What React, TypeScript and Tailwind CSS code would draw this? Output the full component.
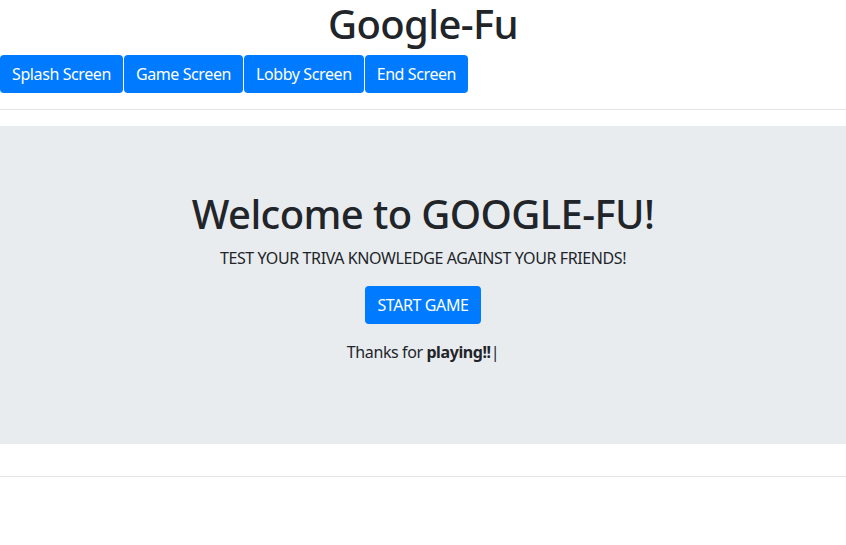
export default function App() {
  const screens = ["Splash Screen", "Game Screen", "Lobby Screen", "End Screen"];
  return (
    <div className="min-h-screen bg-white text-[#212529] font-['Noto_Sans',sans-serif] tracking-[-0.025em]">
      <h1 className="text-center text-[40px] leading-[1.2] font-medium tracking-[-0.015em] mb-[7px]">Google-Fu</h1>
      <div className="flex gap-px">
        {screens.map((s) => (
          <button
            key={s}
            className="h-[38px] px-3 rounded bg-[#007bff] text-white text-base leading-6"
          >
            {s}
          </button>
        ))}
      </div>
      <hr className="mt-4 border-t border-black/10" />
      {/* Jumbotron */}
      <section className="mt-4 mb-8 bg-[#e9ecef] px-8 py-16 text-center">
        <h1 className="text-[40px] leading-[1.2] font-medium tracking-[-0.015em] mb-2">Welcome to GOOGLE-FU!</h1>
        <p className="text-base leading-6 mb-4">TEST YOUR TRIVA KNOWLEDGE AGAINST YOUR FRIENDS!</p>
        <button className="h-[38px] px-3 rounded bg-[#007bff] text-white text-base leading-6 mb-4">
          START GAME
        </button>
        <p className="text-base leading-6 mb-4">
          Thanks for <b className="font-bold">playing!!</b>|
        </p>
      </section>
      <hr className="border-t border-black/10" />
    </div>
  );
}
